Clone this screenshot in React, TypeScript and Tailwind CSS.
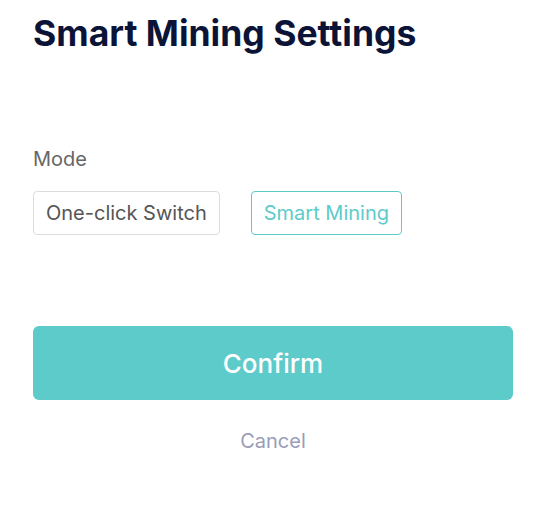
import { useState } from "react";

const MODES = ["One-click Switch", "Smart Mining"];

export default function App() {
  const [mode, setMode] = useState("Smart Mining");

  return (
    <main className="min-h-[516px] w-[560px] bg-white font-['Inter',sans-serif]">
      <section className="w-[513px] pl-[33px] pt-[12px]">
        <h1 className="text-[35.5px] leading-[44px] font-bold text-[#0b1437]">
          Smart Mining Settings
        </h1>

        <p className="mt-[91px] text-[20px] leading-[24px] text-[#666666]">Mode</p>

        <div className="mt-[20px] flex gap-[31px]">
          {MODES.map((m) => (
            <button
              key={m}
              type="button"
              onClick={() => setMode(m)}
              className={
                m === mode
                  ? "h-[44px] rounded-[4px] border border-[#5ecbcb] px-[12px] text-[20px] text-[#5ecbcb]"
                  : "h-[44px] rounded-[4px] border border-[#dcdce0] px-[12px] text-[20px] text-[#555555]"
              }
            >
              {m}
            </button>
          ))}
        </div>

        <button
          type="button"
          className="mt-[91px] h-[74px] w-full rounded-[6px] bg-[#5ecbcb] text-[26px] font-medium text-white"
        >
          Confirm
        </button>

        <button
          type="button"
          className="mx-auto mt-[27px] block text-[20px] leading-[28px] text-[#9a9cb8]"
        >
          Cancel
        </button>
      </section>
    </main>
  );
}
